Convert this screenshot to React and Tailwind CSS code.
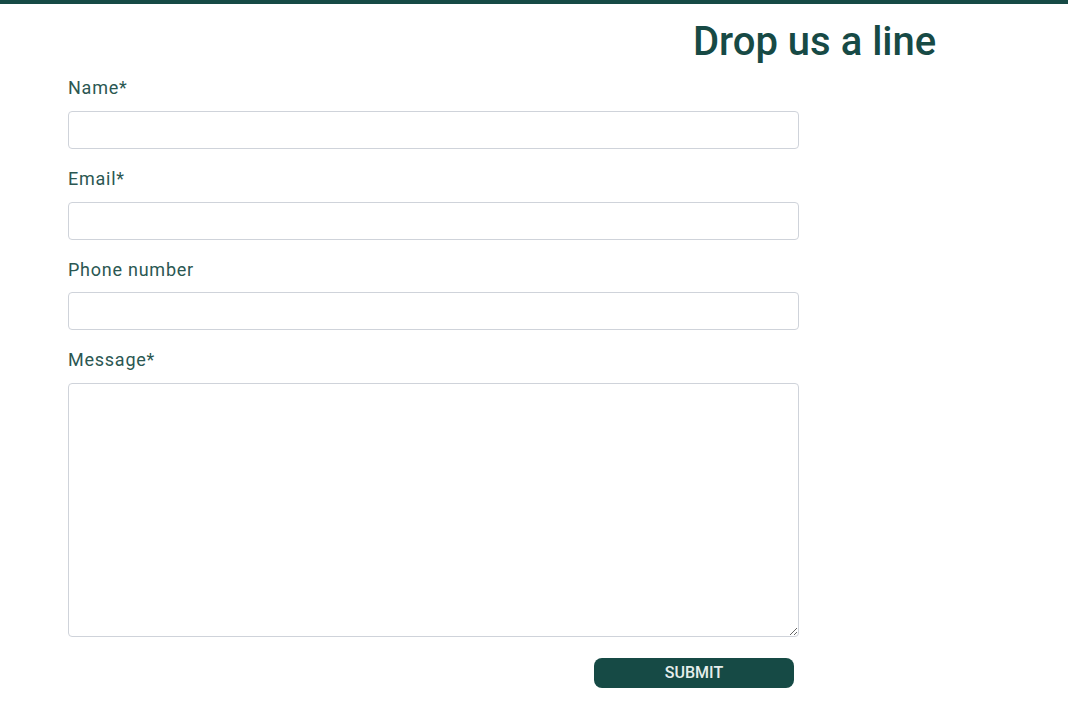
import { useState } from 'react';

const Field = ({ label, gap = 'mt-[9px]', children }) => (
  <div className="flex flex-col">
    <label className="text-[18px] leading-[28px] tracking-[0.75px] text-[#2b5752]">{label}</label>
    <div className={gap}>{children}</div>
  </div>
);

const inputCls =
  'block w-full h-[38px] px-3 border border-[#cfd3da] rounded-[4px] bg-white text-[16px] text-gray-800 focus:outline-none';

export default function App() {
  const [form, setForm] = useState({ name: '', email: '', phone: '', message: '' });
  const set = (k) => (e) => setForm({ ...form, [k]: e.target.value });

  return (
    <div className="min-h-[720px] bg-white font-['Roboto',sans-serif]">
      <div className="h-1 bg-[#164a45]" />

      {/* Heading */}
      <div className="pl-[693px] pt-[14px]">
        <h1 className="text-[40px] leading-[48px] font-medium text-[#174a45]">Drop us a line</h1>
      </div>

      {/* Form */}
      <form
        className="ml-[68px] mt-[8px] w-[731px] flex flex-col gap-[16px]"
        onSubmit={(e) => e.preventDefault()}
      >
        <Field label="Name*">
          <input type="text" value={form.name} onChange={set('name')} className={inputCls} />
        </Field>
        <Field label="Email*">
          <input type="email" value={form.email} onChange={set('email')} className={inputCls} />
        </Field>
        <Field label="Phone number" gap="mt-[8px]">
          <input type="tel" value={form.phone} onChange={set('phone')} className={inputCls} />
        </Field>
        <Field label="Message*">
          <textarea
            value={form.message}
            onChange={set('message')}
            className="block w-full h-[254px] px-3 py-2 border border-[#cfd3da] rounded-[4px] bg-white text-[16px] text-gray-800 focus:outline-none"
          />
        </Field>

        <div className="flex justify-end pr-[5px] mt-[5px]">
          <button
            type="submit"
            className="w-[200px] h-[30px] rounded-[8px] bg-[#164a45] text-[#e6eeec] text-[16px] font-medium uppercase"
          >
            Submit
          </button>
        </div>
      </form>
    </div>
  );
}
